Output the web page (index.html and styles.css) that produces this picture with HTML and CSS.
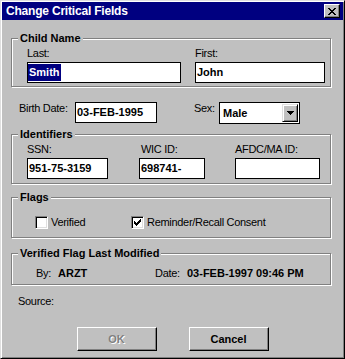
FILE: index.html
```html
<!DOCTYPE html>
<html lang="en">
<head>
  <meta charset="UTF-8" />
  <title>Change Critical Fields</title>
  <link rel="stylesheet" href="styles.css">
</head>
<body>
  <div class="window">
    <div class="titlebar">
      <span class="title">Change Critical Fields</span>
      <span class="close-btn">
        <svg width="8" height="7" viewBox="0 0 8 7" shape-rendering="crispEdges"><path d="M0 0h2v1H0z M6 0h2v1H6z M1 1h2v1H1z M5 1h2v1H5z M2 2h4v1H2z M3 3h2v1H3z M2 4h4v1H2z M1 5h2v1H1z M5 5h2v1H5z M0 6h2v1H0z M6 6h2v1H6z" fill="#000"/></svg>
      </span>
    </div>

    <div class="dialog">
      <fieldset class="group group-name">
        <legend>Child Name</legend>
        <div class="field-row">
          <div class="field col-last">
            <label>Last:</label>
            <div class="edit"><span class="sel">Smith</span></div>
          </div>
          <div class="field col-first">
            <label>First:</label>
            <div class="edit">John</div>
          </div>
        </div>
      </fieldset>

      <div class="inline-row">
        <label class="lbl-birth">Birth Date:</label>
        <div class="edit edit-birth">03-FEB-1995</div>
        <label class="lbl-sex">Sex:</label>
        <div class="combo">
          <span class="combo-text">Male</span>
          <span class="drop-btn">
            <svg width="7" height="4" viewBox="0 0 7 4" shape-rendering="crispEdges"><path d="M0 0h7v1H0z M1 1h5v1H1z M2 2h3v1H2z M3 3h1v1H3z" fill="#000"/></svg>
          </span>
        </div>
      </div>

      <fieldset class="group group-ids">
        <legend>Identifiers</legend>
        <div class="field-row">
          <div class="field col-ssn">
            <label>SSN:</label>
            <div class="edit">951-75-3159</div>
          </div>
          <div class="field col-wic">
            <label>WIC ID:</label>
            <div class="edit">698741-</div>
          </div>
          <div class="field col-afdc">
            <label>AFDC/MA ID:</label>
            <div class="edit"></div>
          </div>
        </div>
      </fieldset>

      <fieldset class="group group-flags">
        <legend>Flags</legend>
        <div class="check-row">
          <div class="check-item item-verified">
            <span class="checkbox"></span>
            <span>Verified</span>
          </div>
          <div class="check-item">
            <span class="checkbox">
              <svg width="7" height="7" viewBox="0 0 7 7" shape-rendering="crispEdges"><path d="M6 0h1v1H6z M5 1h2v1H5z M0 2h1v1H0z M4 2h3v1H4z M0 3h2v1H0z M3 3h3v1H3z M0 4h5v1H0z M1 5h3v1H1z M2 6h1v1H2z" fill="#000"/></svg>
            </span>
            <span>Reminder/Recall Consent</span>
          </div>
        </div>
      </fieldset>

      <fieldset class="group group-mod">
        <legend>Verified Flag Last Modified</legend>
        <div class="mod-row">
          <span class="mod-by">By:</span>
          <span class="mod-user">ARZT</span>
          <span class="mod-date">Date:</span>
          <span class="mod-value">03-FEB-1997 09:46 PM</span>
        </div>
      </fieldset>

      <div class="source">Source:</div>

      <div class="buttons">
        <button class="btn btn-disabled">OK</button>
        <button class="btn">Cancel</button>
      </div>
    </div>
  </div>
</body>
</html>
```

FILE: styles.css
```css
* { margin: 0; padding: 0; box-sizing: border-box; }
body {
  font-family: 'Liberation Sans', Arial, sans-serif;
  font-size: 11px;
  line-height: 13px;
  color: #000;
  background: #c0c0c0;
}
.window {
  width: 345px;
  height: 359px;
  padding: 1px;
  background: #c0c0c0;
  border: 1px solid;
  border-color: #dfdfdf #000 #000 #dfdfdf;
  box-shadow: inset 1px 1px #fff, inset -1px -1px #808080;
}

.titlebar {
  height: 18px;
  background: #000080;
  color: #fff;
  display: flex;
  align-items: center;
  justify-content: space-between;
  padding: 0 3px 0 4px;
}
.title {
  font-weight: bold;
  font-size: 12px;
  letter-spacing: -0.2px;
}
.close-btn {
  width: 16px;
  height: 14px;
  background: #c0c0c0;
  border: 1px solid;
  border-color: #fff #000 #000 #fff;
  box-shadow: inset -1px -1px #808080;
  display: flex;
  align-items: center;
  justify-content: center;
  padding-right: 1px;
}

.dialog {
  display: flex;
  flex-direction: column;
  align-items: flex-start;
}
label, .check-item, .mod-by, .mod-date, .source {
  letter-spacing: -0.3px;
}

.group {
  margin-left: 9px;
  width: 320px;
  min-width: 0;
  padding: 2px 0 3px 15px;
  border: 1px solid #808080;
  box-shadow: inset 1px 1px #fff, 1px 1px #fff;
}
.group legend {
  margin-left: -9px;
  padding: 0 2px;
  font-weight: bold;
  line-height: 13px;
  background: #c0c0c0;
}
.group-name { margin-top: 12px; }
.group-ids { margin-top: 4px; padding-bottom: 4px; }
.group-flags { margin-top: 7px; padding-top: 12px; padding-bottom: 8px; }
.group-mod { margin-top: 9px; padding-top: 7px; padding-bottom: 4px; }

.field-row {
  display: flex;
}
.field {
  display: flex;
  flex-direction: column;
  gap: 2px;
}
.col-last { width: 154px; }
.col-first { width: 130px; margin-left: 14px; }
.col-ssn { width: 81px; }
.col-wic { width: 66px; margin-left: 31px; }
.col-wic label { padding-left: 2px; }
.col-afdc { width: 85px; margin-left: 30px; }

.edit {
  height: 21px;
  background: #fff;
  border: 1px solid #000;
  padding-left: 1px;
  font-weight: bold;
  line-height: 19px;
  white-space: nowrap;
}
.sel {
  display: inline-block;
  vertical-align: top;
  margin: 1px 0 0 -1px;
  padding: 0 1px;
  line-height: 17px;
  background: #000080;
  color: #fff;
}

.inline-row {
  display: flex;
  align-items: flex-start;
  margin-top: 15px;
  padding-left: 17px;
}
.lbl-birth { width: 56px; }
.edit-birth { width: 82px; }
.lbl-sex { width: 25px; margin-left: 37px; }
.combo {
  width: 81px;
  height: 22px;
  background: #fff;
  border: 1px solid #000;
  padding: 1px;
  display: flex;
  align-items: center;
  justify-content: space-between;
  font-weight: bold;
}
.combo-text { padding-left: 2px; }
.drop-btn {
  width: 16px;
  height: 18px;
  background: #c0c0c0;
  border: 1px solid;
  border-color: #dfdfdf #000 #000 #dfdfdf;
  box-shadow: inset 1px 1px #fff, inset -1px -1px #808080;
  display: flex;
  align-items: center;
  justify-content: center;
}

.check-row {
  display: flex;
  padding-left: 8px;
}
.check-item {
  display: flex;
  align-items: center;
  gap: 3px;
}
.item-verified { width: 96px; }
.checkbox {
  width: 13px;
  height: 13px;
  background: #fff;
  border: 1px solid;
  border-color: #808080 #fff #fff #808080;
  box-shadow: inset 1px 1px #000, inset -1px -1px #dfdfdf;
  display: flex;
  align-items: center;
  justify-content: center;
}

.mod-row {
  display: flex;
  padding-left: 9px;
}
.mod-by { width: 22px; }
.mod-user { width: 97px; font-weight: bold; }
.mod-date { width: 32px; }
.mod-value { font-weight: bold; }

.source {
  margin: 10px 0 0 16px;
}

.buttons {
  align-self: stretch;
  display: flex;
  justify-content: center;
  gap: 32px;
  margin-top: 19px;
}
.btn {
  width: 80px;
  height: 24px;
  font-family: inherit;
  font-size: 11px;
  font-weight: bold;
  color: #000;
  background: #c0c0c0;
  border: 1px solid;
  border-color: #fff #000 #000 #fff;
  box-shadow: inset -1px -1px #808080;
}
.btn-disabled {
  color: #808080;
  text-shadow: 1px 1px #fff;
}
```
